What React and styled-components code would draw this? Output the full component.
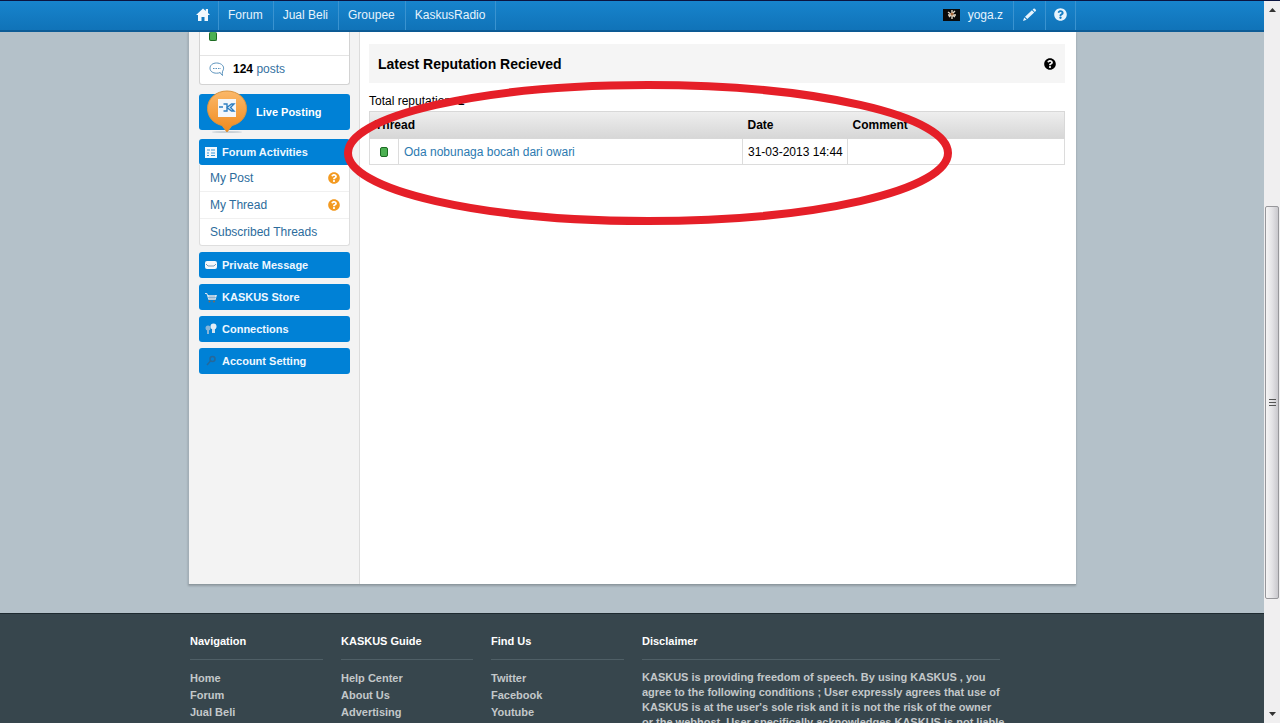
import styled, { createGlobalStyle } from "styled-components";
import { FaQuestionCircle } from "react-icons/fa";

const GlobalStyle = createGlobalStyle`
  * {
    box-sizing: border-box;
  }
  body {
    margin: 0;
    font-family: "Liberation Sans", Arial, sans-serif;
    font-size: 12px;
    color: #000;
    background-color: #b4c1c9;
  }
  a {
    text-decoration: none;
  }
`;

const Window = styled.div`
  display: flex;
  height: 100vh;
  overflow: hidden;
  border-top: 1px solid #0b1440;
`;

const Page = styled.div`
  display: flex;
  flex: 1;
  flex-direction: column;
  min-width: 0;
  background-color: #b4c1c9;
`;

const Wrapper = styled.div`
  width: 100%;
  max-width: 888px;
  margin: 0 auto;
`;

/* ---- top bar ---- */

const TopBar = styled.header`
  flex: none;
  background: linear-gradient(#1784cd, #1073b8);
  border-bottom: 2px solid #0d5c96;
`;

const TopInner = styled(Wrapper)`
  display: flex;
  justify-content: space-between;
`;

const Nav = styled.nav`
  display: flex;
`;

const NavLink = styled.a`
  display: flex;
  align-items: center;
  gap: 8px;
  height: 29px;
  padding: ${(props) => (props.$icon ? "0 8px 2px" : "0 10px 2px 9px")};
  border-right: 1px solid #3a93d0;
  color: #e6f3fc;
`;

const Avatar = styled.svg`
  width: 17px;
  height: 12px;
  background-color: #0a0a0a;
`;

/* ---- content ---- */

const Content = styled(Wrapper)`
  position: relative;
  display: flex;
  flex: none;
  min-height: 553px;
  border-left: 1px solid #a3afb7;
  border-bottom: 1px solid #8d999f;
  background-color: #fff;
  box-shadow: 0 1px 2px rgba(0, 0, 0, 0.2);
`;

const Sidebar = styled.aside`
  flex: none;
  width: 171px;
  padding: 0 9px 0 10px;
  border-right: 1px solid #dcdcdc;
  background-color: #f3f3f3;
`;

const Stats = styled.div`
  margin-bottom: 9px;
  border: 1px solid #d3d3d3;
  border-top: none;
  border-radius: 0 0 3px 3px;
  background-color: #fff;
`;

const ReputationRow = styled.div`
  height: 24px;
  padding-left: 9px;
  border-bottom: 1px solid #e4e4e4;
`;

const ReputationBar = styled.span`
  display: block;
  width: 8px;
  height: ${(props) => (props.$cut ? "9px" : "10px")};
  margin: 0 auto 0 ${(props) => (props.$cut ? "0" : "auto")};
  border: 1px solid #1c6b22;
  border-top-width: ${(props) => (props.$cut ? "0" : "1px")};
  border-radius: 2px;
  background-color: #4cb052;
`;

const PostsRow = styled.div`
  display: flex;
  align-items: center;
  gap: 8px;
  height: 28px;
  padding: 0 9px 2px;

  a {
    color: #34719f;
  }
`;

const LivePosting = styled.a`
  display: flex;
  align-items: center;
  gap: 8px;
  height: 36px;
  margin-bottom: 9px;
  padding-left: 7px;
  border-radius: 3px;
  background-color: #0081d6;
  color: #fff;
  font-size: 11px;
  font-weight: bold;

  svg {
    flex: none;
  }
`;

const MenuGroup = styled.section`
  margin-bottom: 6px;
`;

const MenuButton = styled.button`
  display: flex;
  align-items: center;
  gap: 5px;
  width: 100%;
  height: 26px;
  padding: 0 6px;
  border: none;
  border-radius: 3px;
  background-color: #0081d6;
  color: #eef7ff;
  font: inherit;
  font-size: 11px;
  font-weight: bold;
`;

const MenuList = styled.ul`
  margin: 0;
  padding: 0;
  list-style: none;
  border: 1px solid #dedede;
  border-top: none;
  border-radius: 0 0 3px 3px;
  background-color: #fff;
`;

const MenuItem = styled.li`
  display: flex;
  box-sizing: content-box;
  align-items: center;
  justify-content: space-between;
  height: 26px;
  padding: 0 9px 0 10px;
  border-bottom: 1px solid #f0f0f0;

  &:last-child {
    border-bottom: none;
  }
  a {
    color: #2c6c9c;
  }
`;

const Main = styled.main`
  flex: 1;
  min-width: 0;
  padding: 12px 11px 0 9px;
`;

const TitleBar = styled.div`
  display: flex;
  align-items: center;
  justify-content: space-between;
  height: 39px;
  margin-bottom: 10px;
  padding: 0 9px;
  background-color: #f5f5f5;
`;

const Title = styled.h1`
  margin: 0;
  font-size: 14px;
`;

const Total = styled.p`
  margin: 0 0 2px;
  line-height: 16px;
`;

const Table = styled.table`
  width: 100%;
  table-layout: fixed;
  border-collapse: collapse;
  border: 1px solid #d8d8d8;
`;

const Th = styled.th`
  height: 27px;
  padding: 0 5px;
  border-bottom: 1px solid #d8d8d8;
  text-align: left;
`;

const HeadRow = styled.tr`
  background: linear-gradient(#eeeeee, #d6d6d6);
`;

const Td = styled.td`
  height: 26px;
  padding: 0 5px;
  border: 1px solid #dcdcdc;
  white-space: nowrap;

  a {
    color: #2c7ab0;
  }
`;

const Highlight = styled.svg`
  position: absolute;
  top: 48px;
  left: 153px;
  width: 612px;
  height: 148px;
  pointer-events: none;
`;

/* ---- footer ---- */

const Footer = styled.footer`
  flex: 1;
  margin-top: 28px;
  border-top: 1px solid #1e2a30;
  background-color: #37464d;
  color: #c3c8ca;
  font-size: 11px;
  font-weight: bold;
`;

const FooterInner = styled(Wrapper)`
  display: grid;
  grid-template-columns: 133px 132px 133px 358px;
  column-gap: 18px;
  padding: 18px 0 0 2px;
`;

const FooterTitle = styled.h2`
  height: 28px;
  margin: 0 0 10px;
  border-bottom: 1px solid #4f5f66;
  color: #fff;
  font-size: 11px;
  line-height: 18px;
`;

const FooterList = styled.ul`
  margin: 0;
  padding: 0;
  list-style: none;
  line-height: 17px;

  a {
    color: inherit;
  }
`;

const Disclaimer = styled.p`
  margin: 0;
  line-height: 15px;
  white-space: nowrap;
`;

/* ---- scroll bar ---- */

const ScrollBar = styled.div`
  display: flex;
  flex: none;
  flex-direction: column;
  width: 16px;
  padding: 0 1px;
  background-color: #f0eff0;
`;

const Track = styled.div`
  display: flex;
  flex: ${(props) => props.$size};
  justify-content: center;
  align-items: ${(props) => props.$align};

  svg {
    margin: 7px 0;
  }
`;

const Thumb = styled.div`
  display: flex;
  flex: 392;
  align-items: center;
  justify-content: center;
  border: 1px solid #97979b;
  border-radius: 2px;
  background: linear-gradient(to right, #f5f5f5, #e4e3e6 50%, #c9c8cd);
`;

const HomeIcon = () => (
  <svg width="14" height="13" viewBox="0 0 14 13" fill="#f2f9fe">
    <path d="M7 .5L0 7h2v6h3.500V9h3v4H12V7h2l-2-1.900V1H9.800v2z" />
  </svg>
);

const ChatIcon = () => (
  <svg width="16" height="15" viewBox="0 0 16 15" fill="none" stroke="#5b93bd">
    <path d="M7.500 1C3.700 1 1 3.200 1 6.200s2.700 5 6.500 5c1.500 0 2.700-.2 3.700-.7.5 1.200 1.200 2.200 2.300 3-.3-1.400-.3-2.800.1-4.300.6-.8 1-1.800 1-3C14.600 3.200 11.500 1 7.500 1z" />
    <path d="M4 6.500h8" strokeDasharray="1.500 1" />
  </svg>
);

const PinIcon = () => (
  <svg width="42" height="44" viewBox="0 0 42 44">
    <defs>
      <linearGradient id="pin" x2="0" y2="1">
        <stop offset="0" stopColor="#fbb869" />
        <stop offset="1" stopColor="#f08a1d" />
      </linearGradient>
    </defs>
    <ellipse cx="21" cy="42" rx="15" ry="1" fill="#c9d0d5" />
    <path
      d="M21 1C10 1 1.500 8.500 1.500 18.500c0 8.500 6 15 14.500 17l5 6.500 5-6.500c8.500-2 14.500-8.500 14.500-17C40.500 8.500 32 1 21 1z"
      fill="url(#pin)"
      stroke="#d9943f"
    />
    <rect x="12" y="9" width="18" height="18" fill="#f4f7fa" />
    <path
      d="M13 17h4M17.500 14h3.500v7h-3.500M28 14h-2.500L21 17.500l4.500 3.500H28l-3.500-3.500z"
      fill="none"
      stroke="#2f7fc1"
      strokeWidth="1.400"
    />
  </svg>
);

const PencilIcon = () => (
  <svg width="15" height="14" viewBox="0 0 15 14" fill="#e6f3fc">
    <path d="M1 13l1.200-3.600 2.400 2.300zM3 8.700l6.900-6.500 2.300 2.400-6.900 6.300zM10.600 1.600l1-.9c.4-.4.8-.3 1.200 0l1 1c.4.400.4.800 0 1.200l-1 1z" />
  </svg>
);

const MenuIcon = ({ name }) => (
  <svg width="12" height="12" viewBox="0 0 12 12">
    {name === "list" && (
      <>
        <rect width="12" height="11" y="1" fill="#f1f8fd" />
        <path d="M2 4h3M6 4h4M2 7h2M6 7h4M2 9.500h2M6 9.500h4" stroke="#3b97d7" />
      </>
    )}
    {name === "mail" && (
      <>
        <rect y="2" width="12" height="8" rx="2" fill="#f4f8fb" />
        <path d="M1 5l2 2h6l2-2" fill="none" stroke="#7f9db5" />
      </>
    )}
    {name === "cart" && (
      <>
        <path d="M0 2h2l1 2h9l-1.500 5h-7L1.500 3H0z" fill="#d3e3ef" />
        <path d="M3 6.500h8M5 4v5M7 4v5M9 4v5" stroke="#6f9fc4" strokeWidth="0.600" />
        <circle cx="4.500" cy="10.500" r="1" fill="#85694f" />
        <circle cx="9" cy="10.500" r="1" fill="#85694f" />
      </>
    )}
    {name === "people" && (
      <>
        <circle cx="3" cy="5" r="2.500" fill="#87b5d8" />
        <path d="M2 7h2v4H2z" fill="#87b5d8" />
        <circle cx="8.500" cy="3.500" r="3" fill="#e2eef7" />
        <path d="M7 6h3v4H7z" fill="#cfe1ef" />
      </>
    )}
    {name === "key" && (
      <g fill="none" stroke="#26689a" strokeWidth="1.500">
        <circle cx="7.500" cy="4" r="2.500" />
        <path d="M5.500 6L2 10" />
      </g>
    )}
  </svg>
);

const sections = [
  { label: "Private Message", icon: "mail" },
  { label: "KASKUS Store", icon: "cart" },
  { label: "Connections", icon: "people" },
  { label: "Account Setting", icon: "key" },
];

const footerColumns = [
  { title: "Navigation", links: ["Home", "Forum", "Jual Beli"] },
  { title: "KASKUS Guide", links: ["Help Center", "About Us", "Advertising"] },
  { title: "Find Us", links: ["Twitter", "Facebook", "Youtube"] },
];

const App = () => {
  return (
    <Window>
      <GlobalStyle />
      <Page>
        <TopBar>
          <TopInner>
            <Nav>
              <NavLink href="#" $icon aria-label="Home">
                <HomeIcon />
              </NavLink>
              {["Forum", "Jual Beli", "Groupee", "KaskusRadio"].map((item) => (
                <NavLink href="#" key={item}>
                  {item}
                </NavLink>
              ))}
            </Nav>
            <Nav>
              <NavLink href="#">
                <Avatar viewBox="0 0 17 12">
                  <path
                    d="M9 1v9M5 3l7 5M12 2L6 8M5 6h8"
                    stroke="#e3d9c8"
                    strokeWidth="1.400"
                  />
                  <circle cx="9" cy="5" r="1.500" fill="#a8683a" />
                </Avatar>
                yoga.z
              </NavLink>
              <NavLink href="#" $icon aria-label="Write">
                <PencilIcon />
              </NavLink>
              <NavLink href="#" $icon aria-label="Help">
                <FaQuestionCircle size={13} />
              </NavLink>
            </Nav>
          </TopInner>
        </TopBar>

        <Content>
          <Sidebar>
            <Stats>
              <ReputationRow>
                <ReputationBar $cut />
              </ReputationRow>
              <PostsRow>
                <ChatIcon />
                <span>
                  <b>124</b> <a href="#">posts</a>
                </span>
              </PostsRow>
            </Stats>
            <LivePosting href="#">
              <PinIcon />
              Live Posting
            </LivePosting>
            <MenuGroup>
              <MenuButton>
                <MenuIcon name="list" />
                Forum Activities
              </MenuButton>
              <MenuList>
                <MenuItem>
                  <a href="#">My Post</a>
                  <FaQuestionCircle size={12} color="#f39a21" />
                </MenuItem>
                <MenuItem>
                  <a href="#">My Thread</a>
                  <FaQuestionCircle size={12} color="#f39a21" />
                </MenuItem>
                <MenuItem>
                  <a href="#">Subscribed Threads</a>
                </MenuItem>
              </MenuList>
            </MenuGroup>
            {sections.map((section) => (
              <MenuGroup key={section.label}>
                <MenuButton>
                  <MenuIcon name={section.icon} />
                  {section.label}
                </MenuButton>
              </MenuGroup>
            ))}
          </Sidebar>

          <Main>
            <TitleBar>
              <Title>Latest Reputation Recieved</Title>
              <FaQuestionCircle size={12} />
            </TitleBar>
            <Total>
              Total reputation: <b>1</b>
            </Total>
            <Table>
              <colgroup>
                <col width="29" />
                <col />
                <col width="105" />
                <col width="217" />
              </colgroup>
              <thead>
                <HeadRow>
                  <Th colSpan={2}>Thread</Th>
                  <Th>Date</Th>
                  <Th>Comment</Th>
                </HeadRow>
              </thead>
              <tbody>
                <tr>
                  <Td>
                    <ReputationBar />
                  </Td>
                  <Td>
                    <a href="#">Oda nobunaga bocah dari owari</a>
                  </Td>
                  <Td>31-03-2013 14:44</Td>
                  <Td />
                </tr>
              </tbody>
            </Table>
          </Main>

          <Highlight viewBox="0 0 612 148">
            <ellipse
              cx="306"
              cy="73"
              rx="300"
              ry="68"
              fill="none"
              stroke="#e51f28"
              strokeWidth="8"
            />
          </Highlight>
        </Content>

        <Footer>
          <FooterInner>
            {footerColumns.map((column) => (
              <div key={column.title}>
                <FooterTitle>{column.title}</FooterTitle>
                <FooterList>
                  {column.links.map((link) => (
                    <li key={link}>
                      <a href="#">{link}</a>
                    </li>
                  ))}
                </FooterList>
              </div>
            ))}
            <div>
              <FooterTitle>Disclaimer</FooterTitle>
              <Disclaimer>
                KASKUS is providing freedom of speech. By using KASKUS , you
                <br />
                agree to the following conditions ; User expressly agrees that use of
                <br />
                KASKUS is at the user's sole risk and it is not the risk of the owner
                <br />
                or the webhost. User specifically acknowledges KASKUS is not liable
              </Disclaimer>
            </div>
          </FooterInner>
        </Footer>
      </Page>

      <ScrollBar>
        <Track $size={206} $align="flex-start">
          <svg width="7" height="4" viewBox="0 0 7 4">
            <path d="M0 4l3.500-4L7 4z" fill="#333" />
          </svg>
        </Track>
        <Thumb>
          <svg width="7" height="8" viewBox="0 0 7 8">
            <path d="M0 .5h7M0 3.500h7M0 6.500h7" stroke="#555" />
          </svg>
        </Thumb>
        <Track $size={124} $align="flex-end">
          <svg width="7" height="4" viewBox="0 0 7 4">
            <path d="M0 0l3.500 4L7 0z" fill="#333" />
          </svg>
        </Track>
      </ScrollBar>
    </Window>
  );
};

export default App;
